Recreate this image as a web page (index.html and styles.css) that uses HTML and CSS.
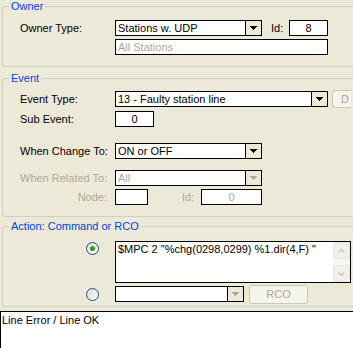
FILE: index.html
```html
<!DOCTYPE html>
<html lang="en">
<head>
    <meta charset="UTF-8">
    <title>Event Action</title>
    <link rel="stylesheet" href="styles.css">
</head>
<body>
    <fieldset class="group owner">
        <legend>Owner</legend>
        <div class="row">
            <span class="lbl">Owner Type:</span>
            <div class="combo w147">
                <span class="val">Stations w. UDP</span>
                <span class="drop"><svg width="7" height="4" viewBox="0 0 7 4"><polygon points="0,0 7,0 7,1 6,1 6,2 5,2 5,3 4,3 4,4 3,4 3,3 2,3 2,2 1,2 1,1 0,1"/></svg></span>
            </div>
            <span class="id-lbl">Id:</span>
            <div class="field w39 center">8</div>
        </div>
        <div class="row gap3">
            <span class="lbl"></span>
            <div class="field w213 off">All Stations</div>
        </div>
    </fieldset>

    <fieldset class="group event">
        <legend>Event</legend>
        <div class="row">
            <span class="lbl">Event Type:</span>
            <div class="combo w213">
                <span class="val">13 - Faulty station line</span>
                <span class="drop"><svg width="7" height="4" viewBox="0 0 7 4"><polygon points="0,0 7,0 7,1 6,1 6,2 5,2 5,3 4,3 4,4 3,4 3,3 2,3 2,2 1,2 1,1 0,1"/></svg></span>
            </div>
            <div class="btn btn-d">D</div>
        </div>
        <div class="row gap4">
            <span class="lbl">Sub Event:</span>
            <div class="field w39 center">0</div>
        </div>
        <div class="row gap16">
            <span class="lbl">When Change To:</span>
            <div class="combo w147">
                <span class="val">ON or OFF</span>
                <span class="drop"><svg width="7" height="4" viewBox="0 0 7 4"><polygon points="0,0 7,0 7,1 6,1 6,2 5,2 5,3 4,3 4,4 3,4 3,3 2,3 2,2 1,2 1,1 0,1"/></svg></span>
            </div>
        </div>
        <div class="row gap11">
            <span class="lbl off">When Related To:</span>
            <div class="combo w147 off">
                <span class="val">All</span>
                <span class="drop"><svg width="7" height="4" viewBox="0 0 7 4"><polygon points="0,0 7,0 7,1 6,1 6,2 5,2 5,3 4,3 4,4 3,4 3,3 2,3 2,2 1,2 1,1 0,1"/></svg></span>
            </div>
        </div>
        <div class="row gap3">
            <span class="lbl off right">Node:</span>
            <div class="field w33"></div>
            <span class="id-lbl off node-id">Id:</span>
            <div class="field w61 center off">0</div>
        </div>
    </fieldset>

    <fieldset class="group action">
        <legend>Action: Command or RCO</legend>
        <div class="row tall">
            <span class="lbl"><span class="radio on"></span></span>
            <div class="memo">
                <div class="memo-text">$MPC 2 "%chg(0298,0299) %1.dir(4,F) "</div>
                <div class="vscroll">
                    <span class="sbtn"><svg width="7" height="4" viewBox="0 0 7 4"><polyline points="0.5,3.5 3.5,0.5 6.5,3.5" /></svg></span>
                    <span class="sbtn"><svg width="7" height="4" viewBox="0 0 7 4"><polyline points="0.5,0.5 3.5,3.5 6.5,0.5" /></svg></span>
                </div>
            </div>
        </div>
        <div class="row gap3">
            <span class="lbl"><span class="radio"></span></span>
            <div class="combo w129 off">
                <span class="val"></span>
                <span class="drop"><svg width="7" height="4" viewBox="0 0 7 4"><polygon points="0,0 7,0 7,1 6,1 6,2 5,2 5,3 4,3 4,4 3,4 3,3 2,3 2,2 1,2 1,1 0,1"/></svg></span>
            </div>
            <div class="btn btn-rco">RCO</div>
        </div>
    </fieldset>

    <div class="output">Line Error / Line OK</div>
</body>
</html>
```

FILE: styles.css
```css
body {
    margin: 0;
    background-color: #ece9d8;
    font-family: "Liberation Sans", Arial, sans-serif;
    font-size: 11px;
    color: #000000;
    overflow: hidden;
}
.group {
    margin: 0 0 0 2px;
    border: 1px solid #d0d0bf;
    border-right: none;
    border-radius: 3px 0 0 3px;
    padding: 7px 0 11px 17px;
    min-width: 0;
}
.group legend {
    color: #0046d5;
    line-height: 13px;
    padding: 0 2px;
    margin-left: -11px;
}
.event {
    margin-top: 5px;
    padding-top: 6px;
}
.action {
    margin-top: 3px;
    padding-top: 8px;
    padding-bottom: 4px;
}
.row {
    display: flex;
    align-items: center;
    height: 16px;
}
.row.tall {
    height: 42px;
    align-items: flex-start;
}
.gap3 { margin-top: 3px; }
.gap4 { margin-top: 4px; }
.gap11 { margin-top: 11px; }
.gap16 { margin-top: 16px; }
.lbl {
    width: 95px;
    flex: none;
    white-space: nowrap;
}
.lbl.right {
    text-align: right;
    padding-right: 8px;
    box-sizing: border-box;
}
.off {
    color: #aca899;
}
.field,
.combo {
    box-sizing: border-box;
    height: 16px;
    border: 1px solid #000000;
    background-color: #ffffff;
    line-height: 14px;
    flex: none;
}
.field {
    padding: 0 2px;
    white-space: nowrap;
    overflow: hidden;
}
.center { text-align: center; }
.w33 { width: 33px; }
.w39 { width: 39px; }
.w61 { width: 61px; }
.w129 { width: 129px; }
.w147 { width: 147px; }
.w213 { width: 213px; }
.combo {
    display: flex;
}
.combo .val {
    flex: 1;
    padding-left: 2px;
    white-space: nowrap;
    overflow: hidden;
}
.combo .drop {
    width: 15px;
    border-left: 1px solid #000000;
    background-color: #ece9d8;
    display: flex;
    align-items: center;
    justify-content: center;
}
.combo .drop polygon {
    fill: #000000;
}
.combo.off .drop polygon {
    fill: #aca899;
}
.id-lbl {
    margin-left: 9px;
    width: 18px;
    flex: none;
}
.node-id {
    margin-left: 34px;
    width: 19px;
}
.btn {
    box-sizing: border-box;
    flex: none;
    border: 1px solid #c9c7ba;
    border-radius: 3px;
    background-color: #f5f4ea;
    color: #aca899;
    text-align: center;
}
.btn-d {
    margin-left: 4px;
    width: 19px;
    height: 18px;
    line-height: 16px;
    text-align: left;
    padding-left: 8px;
    border-right: none;
    border-radius: 3px 0 0 3px;
    overflow: hidden;
}
.btn-rco {
    margin-left: 5px;
    width: 59px;
    height: 19px;
    line-height: 17px;
}
.radio {
    display: block;
    position: relative;
    width: 13px;
    height: 13px;
    box-sizing: border-box;
    margin-left: 66px;
    border: 1px solid #1c5180;
    border-radius: 50%;
    background: linear-gradient(135deg, #dcdcd7, #ffffff);
}
.row.tall .radio {
    margin-top: 1px;
}
.radio.on::after {
    content: "";
    position: absolute;
    left: 3px;
    top: 3px;
    width: 5px;
    height: 5px;
    border-radius: 50%;
    background-color: #21a121;
}
.memo {
    box-sizing: border-box;
    width: 236px;
    height: 42px;
    border: 1px solid #000000;
    background-color: #ffffff;
    display: flex;
}
.memo-text {
    flex: 1;
    padding: 1px 2px;
    white-space: nowrap;
    overflow: hidden;
}
.vscroll {
    width: 17px;
    background-color: #f6f6f2;
    display: flex;
    flex-direction: column;
    justify-content: space-between;
}
.sbtn {
    height: 17px;
    box-sizing: border-box;
    border: 1px solid #e8e8e3;
    border-radius: 2px;
    background-color: #f0f0ec;
    display: flex;
    align-items: center;
    justify-content: center;
}
.sbtn polyline {
    fill: none;
    stroke: #c9c7ba;
    stroke-width: 1.5;
}
.output {
    margin-top: 4px;
    height: 40px;
    border: 1px solid #000000;
    border-right: none;
    background-color: #ffffff;
    padding: 2px 1px;
}
```
